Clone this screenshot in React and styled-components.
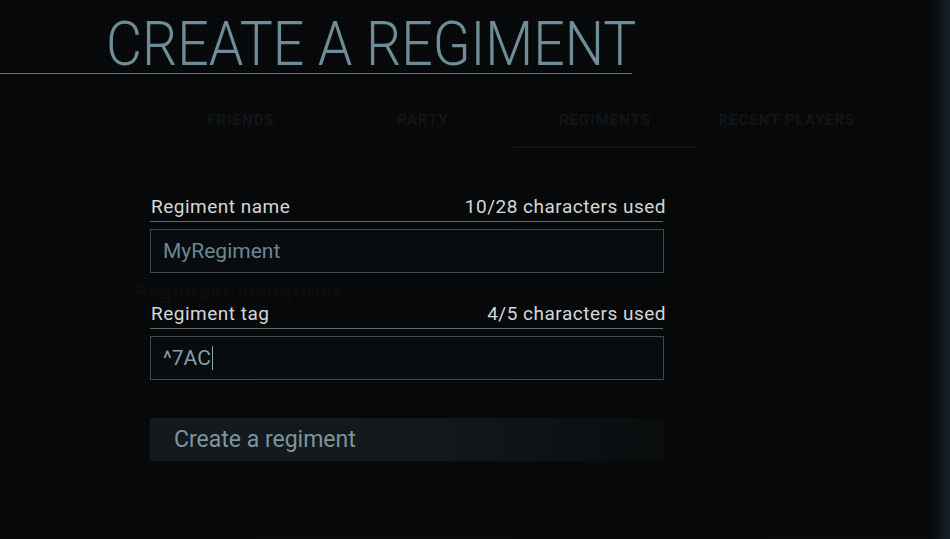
import React from "react";
import styled, { createGlobalStyle } from "styled-components";

const GlobalStyle = createGlobalStyle`
  html, body {
    margin: 0;
    padding: 0;
    background: #060708;
    overflow: hidden;
  }
  #root {
    width: 950px;
    height: 539px;
  }
`;

const Screen = styled.div`
  position: relative;
  width: 950px;
  height: 539px;
  overflow: hidden;
  font-family: Roboto, "Liberation Sans", sans-serif;
  background:
    linear-gradient(90deg, rgba(0,0,0,0) 932px, rgba(24,35,45,0.95) 950px),
    repeating-linear-gradient(90deg, rgba(255,255,255,0.012) 0 1px, transparent 1px 4px),
    repeating-linear-gradient(0deg, rgba(255,255,255,0.012) 0 1px, transparent 1px 4px),
    #060708;
  display: flex;
  flex-direction: column;
`;

const Header = styled.header`
  width: 632px;
  border-bottom: 1px solid #5b7883;
  padding: 11px 0 0 106px;
  box-sizing: border-box;
  height: 74px;
`;

const Title = styled.h1`
  margin: 0;
  font-weight: 300;
  font-size: 61px;
  line-height: 66px;
  color: #6f8d98;
  white-space: nowrap;
  transform: scaleX(0.908);
  transform-origin: left center;
`;

const Tabs = styled.nav`
  display: flex;
  margin: 20px 0 0 150px;
  width: 728px;
`;

const Tab = styled.div`
  flex: 1;
  height: 52px;
  display: flex;
  align-items: center;
  justify-content: center;
  font-size: 15px;
  font-weight: 700;
  letter-spacing: 1px;
  color: #121517;
  border-bottom: 2px solid ${(p) => (p.$active ? "#111416" : "transparent")};
`;

const Form = styled.form`
  width: 514px;
  margin: 44px 0 0 150px;
  display: flex;
  flex-direction: column;
`;

const FieldHead = styled.div`
  display: flex;
  justify-content: space-between;
  align-items: flex-end;
  height: 26px;
  padding: 0 0 3px 1px;
  margin-right: 1px;
  border-bottom: 1px solid #5e696e;
  font-size: 19px;
  line-height: 22px;
  letter-spacing: 0.5px;
  color: #d3d7d9;

  span:last-child {
    margin-right: -3px;
  }
`;

const Field = styled.div`
  margin-bottom: ${(p) => p.$gap}px;
`;

const Ghost = styled.div`
  position: absolute;
  left: 135px;
  top: 284px;
  font-size: 20px;
  line-height: 16px;
  letter-spacing: 1.4px;
  color: #0c0e10;
`;

const Input = styled.div`
  margin-top: 7px;
  height: 44px;
  box-sizing: border-box;
  border: 1px solid #3e4a4f;
  background: #090c0e;
  padding: 0 12px;
  display: flex;
  align-items: center;
  font-size: 21px;
  color: ${(p) => p.$color};
`;

const Caret = styled.span`
  display: inline-block;
  width: 1px;
  height: 24px;
  background: #8aa3ad;
  margin-left: 1px;
`;

const Button = styled.button`
  margin-top: 38px;
  height: 43px;
  border: none;
  text-align: left;
  padding: 0 24px;
  font-family: inherit;
  font-size: 23px;
  color: #7d949c;
  background: linear-gradient(90deg, #13191c 0%, #12181b 55%, rgba(14,18,20,0.4) 100%);
`;

export default function App() {
  return (
    <Screen>
      <GlobalStyle />
      <Header>
        <Title>CREATE A REGIMENT</Title>
      </Header>
      <Tabs>
        <Tab>FRIENDS</Tab>
        <Tab>PARTY</Tab>
        <Tab $active>REGIMENTS</Tab>
        <Tab>RECENT PLAYERS</Tab>
      </Tabs>
      <Ghost>Regiment invitations</Ghost>
      <Form>
        <Field $gap={26}>
          <FieldHead>
            <span>Regiment name</span>
            <span>10/28 characters used</span>
          </FieldHead>
          <Input $color="#6a8893">MyRegiment</Input>
        </Field>
        <Field $gap={0}>
          <FieldHead>
            <span>Regiment tag</span>
            <span>4/5 characters used</span>
          </FieldHead>
          <Input $color="#859ea8">
            ^7AC
            <Caret />
          </Input>
        </Field>
        <Button type="button">Create a regiment</Button>
      </Form>
    </Screen>
  );
}
